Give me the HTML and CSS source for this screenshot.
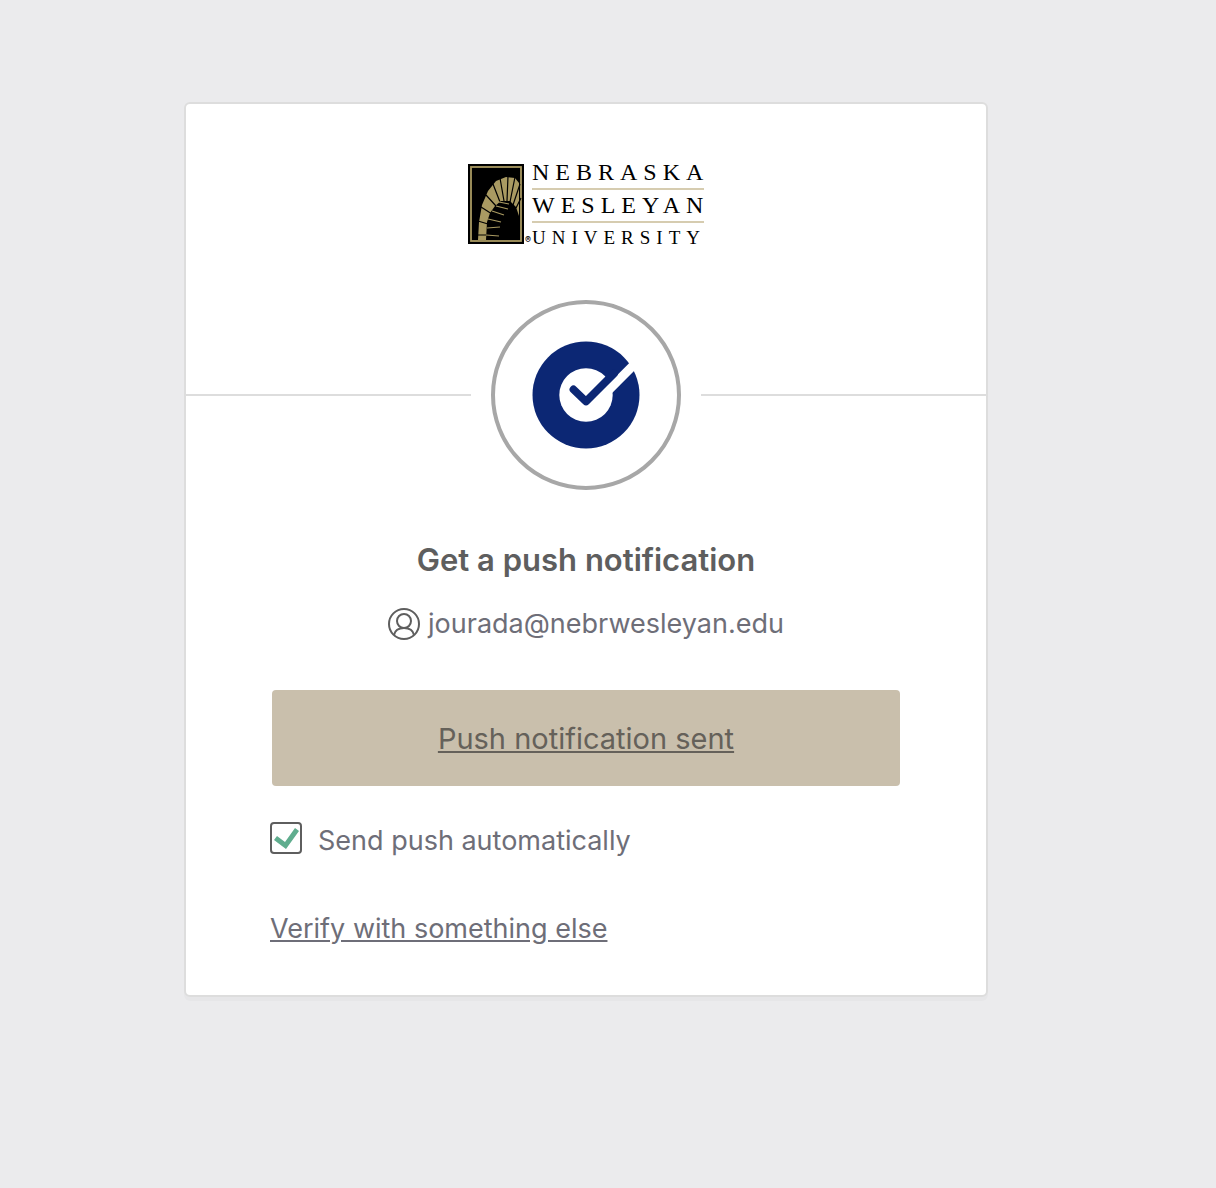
FILE: index.html
```html
<!DOCTYPE html>
<html lang="en">
<head>
<meta charset="UTF-8" />
<meta name="viewport" content="width=device-width,initial-scale=1" />
<title>Nebraska Wesleyan University - Sign In</title>
<link rel="stylesheet" href="styles.css">
</head>
<body>
<main class="auth-card">

  <!-- LOGO -->
  <header class="logo">
    <svg class="logo-mark" viewBox="0 0 56 80" aria-hidden="true">
      <rect width="56" height="80" fill="#000"/>
      <rect x="3" y="3" width="50" height="74" fill="none" stroke="#a99a62" stroke-width="1.8"/>
      <path fill="#a99a62" d="M10 76 L11 58 L14 41 L20 27 L28 17 L38 13 L47 14 L51 19 L51 52 L48 43 L42 37 L33 37 L27 42 L22 49 L19 58 L18 76Z"/>
      <path stroke="#000" stroke-width="1.2" fill="none" d="M9 71H19M10 57L20 60M13 43L24 50M18 31L28 42M25 20L32 38M32 14L36 37M40 12L39 37M47 13L42 38M52 20L45 41M53 34L48 44"/>
      <path stroke="#a99a62" stroke-width="1.2" fill="none" d="M31 38L41 40M28 42L40 45M24 47L36 51M20 55L33 58M19 64L32 63M18 71L31 72"/>
    </svg>
    <span class="logo-reg">®</span>
    <div class="logo-words">
      <span class="logo-line">NEBRASKA</span>
      <span class="logo-line">WESLEYAN</span>
      <span class="logo-line logo-small">UNIVERSITY</span>
    </div>
  </header>

  <!-- FACTOR BADGE -->
  <div class="badge-row">
    <div class="badge">
      <svg class="badge-icon" viewBox="0 0 108 108" aria-hidden="true">
        <circle cx="54" cy="54" r="53.5" fill="#0c2774"/>
        <path d="M68 57.7L108 17.7" stroke="#fff" stroke-width="9"/>
        <circle cx="54" cy="54" r="26.7" fill="#fff"/>
        <path d="M41.5 48.5L54 60.5L82 32.5" fill="none" stroke="#0c2774" stroke-width="7.8" stroke-linecap="round" stroke-linejoin="round"/>
      </svg>
    </div>
  </div>

  <!-- PUSH FORM -->
  <form class="push-form">
    <h2>Get a push notification</h2>
    <div class="user">
      <svg class="user-icon" viewBox="0 0 32 32" aria-hidden="true">
        <g fill="none" stroke="#5e5e5e" stroke-width="2">
          <circle cx="16" cy="16" r="15"/>
          <circle cx="16" cy="13" r="7"/>
          <path d="M6 27C7 22 11 20 16 20S25 22 26 27"/>
        </g>
      </svg>
      <span>jourada@nebrwesleyan.edu</span>
    </div>
    <button type="button" class="push-btn">Push notification sent</button>
    <div class="auto-push">
      <input type="checkbox" id="autoPush" checked />
      <label for="autoPush">Send push automatically</label>
    </div>
    <a href="#" class="other-link">Verify with something else</a>
  </form>

</main>
</body>
</html>
```
FILE: styles.css
```css
:root{
  --text:#6e6e78; --dark:#5e5e5e; --line:#dddddd; --tan:#c9bfac; --green:#5fad8e;
}
*{
  box-sizing:border-box;
  margin:0;
  padding:0;
}
body{
  background:#ebebed;
  color:var(--text);
  font-family:Inter,sans-serif;
  font-size:27px;
  line-height:32px;
  padding:102px 44px 102px 0;
}
.auth-card{
  width:100%;
  max-width:804px;
  margin:0 auto;
  background:#fff;
  border:2px solid var(--line);
  border-radius:6px;
  box-shadow:0 4px 0 rgba(0,0,0,.02);
}

/* logo */
.logo{
  display:flex;
  justify-content:center;
  align-items:flex-end;
  padding-top:60px;
}
.logo-mark{width:56px;height:80px}
.logo-reg{
  width:8px;
  text-align:center;
  color:#000;
  font-size:9px;
  font-weight:600;
  line-height:8px;
}
.logo-words{
  width:172px;
  height:80px;
  color:#000;
  font-family:"Liberation Serif",serif;
}
.logo-line{
  display:block;
  font-size:24px;
  line-height:16px;
  letter-spacing:6px;
  white-space:nowrap;
}
.logo-line:not(:last-child){
  height:26px;
  margin-bottom:7px;
  border-bottom:2px solid #d6ccb0;
}
.logo-small{
  font-size:19px;
  line-height:16px;
}

/* badge with a rule on both sides */
.badge-row{
  display:flex;
  align-items:center;
  gap:20px;
  padding-top:56px;
}
.badge-row::before,
.badge-row::after{
  content:"";
  flex:1;
  height:2px;
  background:var(--line);
}
.badge{
  display:flex;
  justify-content:center;
  align-items:center;
  width:190px;
  height:190px;
  border:4px solid #a7a7a7;
  border-radius:50%;
}
.badge-icon{width:108px;height:108px}

/* form */
.push-form{
  padding:50px 84px;
}
h2{
  color:var(--dark);
  font-size:31px;
  font-weight:600;
  line-height:40px;
  text-align:center;
}
.user{
  display:flex;
  justify-content:center;
  align-items:center;
  gap:8px;
  margin-top:28px;
}
.user-icon{width:32px;height:32px}
.push-btn{
  display:block;
  width:calc(100% - 4px);
  height:96px;
  margin:50px auto 36px;
  background:var(--tan);
  color:#65615a;
  border:none;
  border-radius:4px;
  font-family:inherit;
  font-size:29px;
  text-decoration:underline;
  cursor:pointer;
}
.auto-push{
  display:flex;
  gap:16px;
}
.auto-push input{
  appearance:none;
  width:32px;
  height:32px;
  border:2px solid var(--dark);
  border-radius:4px;
  cursor:pointer;
}
.auto-push input:checked::before{
  content:"";
  display:block;
  height:28px;
  background:var(--green);
  clip-path:polygon(2px 16px,5px 12px,13px 18px,23px 4px,27px 7px,14px 25px);
}
.auto-push label{padding-top:3px}
.other-link{
  display:inline-block;
  margin-top:56px;
  color:var(--text);
}
```
